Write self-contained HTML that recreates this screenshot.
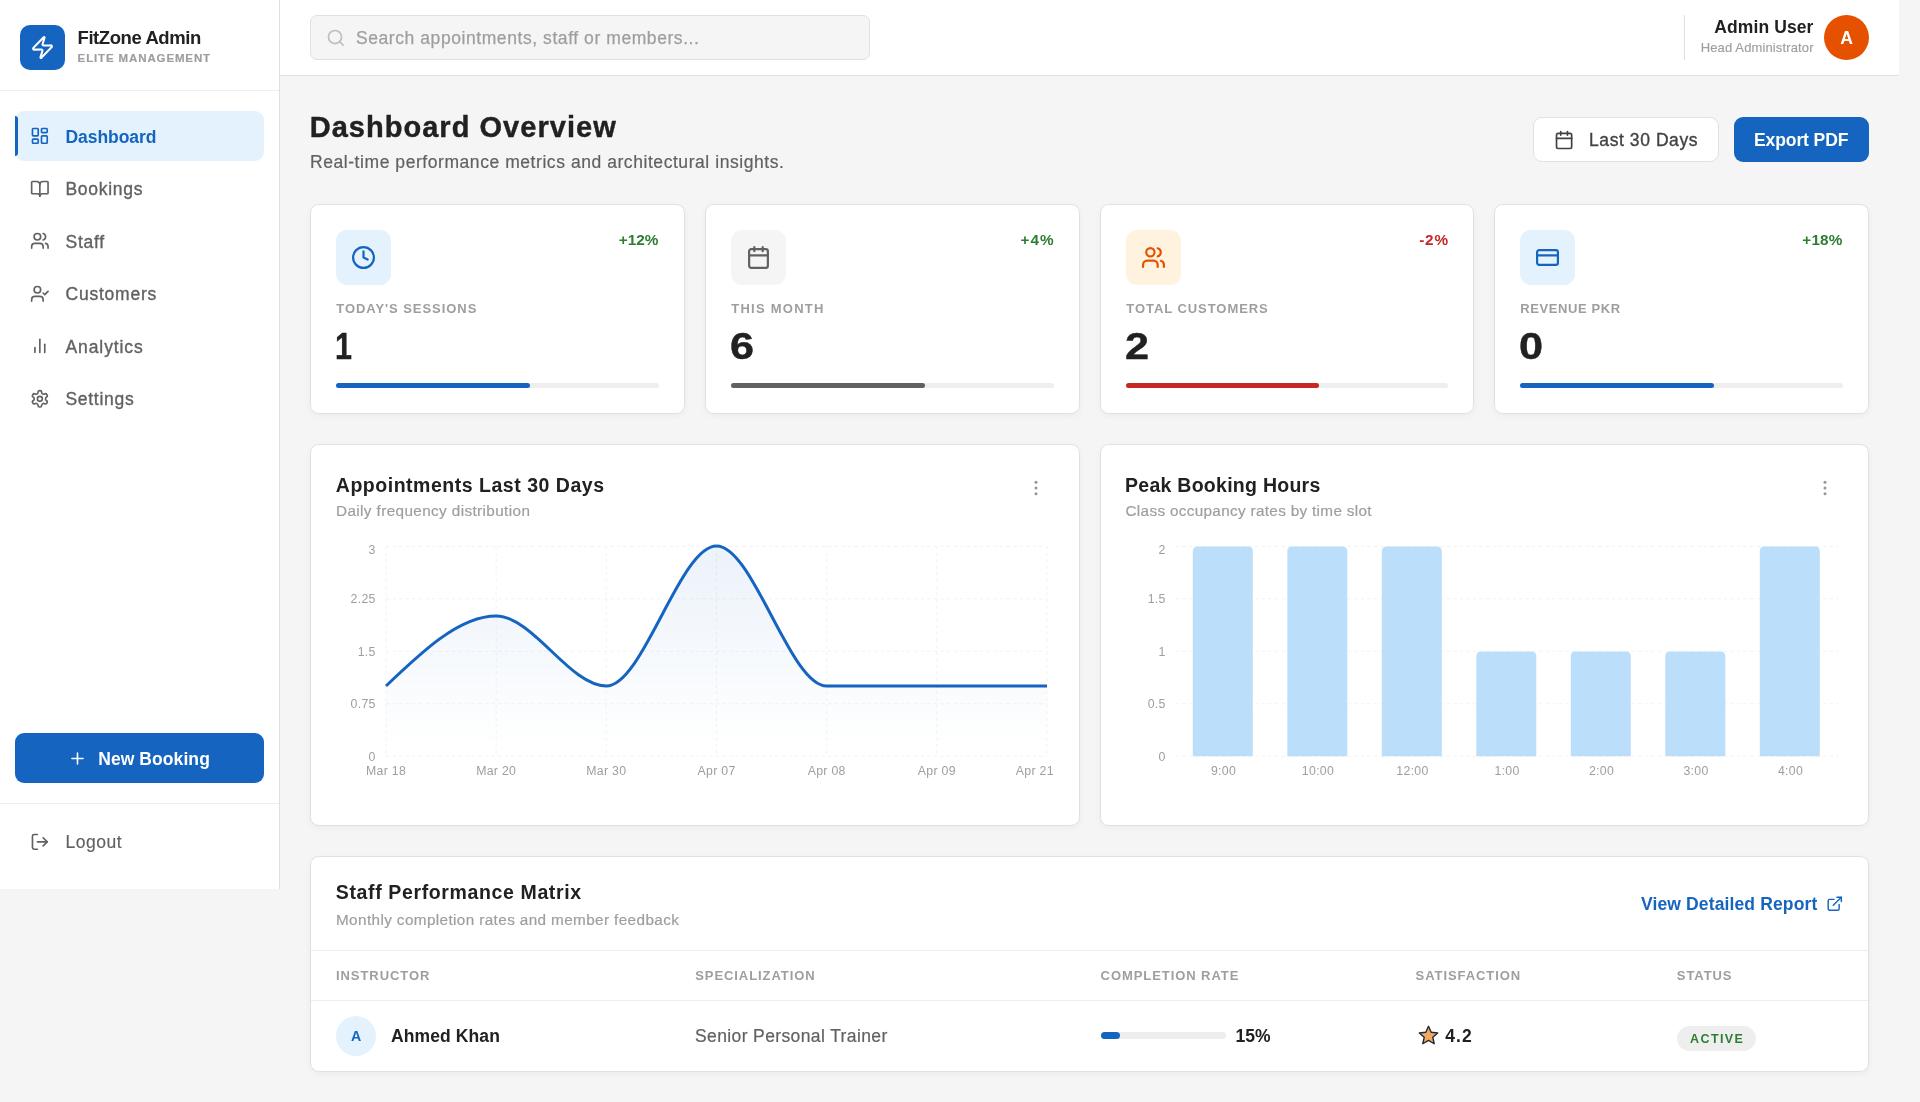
<!DOCTYPE html>
<html lang="en">
<head>
<meta charset="utf-8">
<title>FitZone Admin</title>
<style>
*{box-sizing:border-box;margin:0;padding:0}
html,body{width:1920px;height:1102px;overflow:hidden}
body{background:#f5f5f5;font-family:"Liberation Sans",sans-serif;color:#212121;position:relative;-webkit-font-smoothing:antialiased}
#root{position:absolute;left:0;top:0;width:1920px;height:1102px;will-change:transform}
.abs{position:absolute}
.t{position:absolute;white-space:nowrap;line-height:1}
.b{font-weight:700}
svg.i{position:absolute;fill:none;stroke:currentColor;stroke-width:2;stroke-linecap:round;stroke-linejoin:round}
/* sidebar */
#sb{position:absolute;left:0;top:0;width:280px;height:889px;background:#fff;border-right:1px solid #e0e0e0}
#sbh{position:absolute;left:0;top:0;width:279px;height:91px;border-bottom:1px solid #eeeeee}
#logo{position:absolute;left:20px;top:25px;width:45px;height:45px;border-radius:10px;background:#1565c0;color:#fff}
.nav{position:absolute;left:15px;width:249px;height:50.3px;border-radius:9px;color:#616161}
.nav.on{background:#e3f2fd;color:#1565c0}
.nav.on:before{content:"";position:absolute;left:0;top:5px;bottom:5px;width:3px;background:#1565c0;border-radius:0 3px 3px 0}
.nav .t{left:50.5px;top:17.6px;font-size:17.5px;-webkit-text-stroke:.35px currentColor}
.nav.on .t{font-weight:700;-webkit-text-stroke:0;letter-spacing:-.07px}
.nav svg.i{left:15.15px;top:15.2px;width:19.7px;height:19.7px}
#nb{position:absolute;left:15px;top:733px;width:249px;height:50px;border-radius:9px;background:#1565c0;color:#fff}
#sbf{position:absolute;left:0;top:803px;width:279px;height:1px;background:#eeeeee}
/* header */
#hd{position:absolute;left:280px;top:0;width:1619px;height:76px;background:#fff;border-bottom:1px solid #e0e0e0}
#search{position:absolute;left:30px;top:15px;width:560px;height:45px;border-radius:7px;background:#f5f5f5;border:1px solid #e0e0e0;color:#9e9e9e}
#av{position:absolute;left:1544px;top:15px;width:45px;height:45px;border-radius:50%;background:#e65100;color:#fff}
/* cards */
.card{position:absolute;background:#fff;border:1px solid #e0e0e0;border-radius:8.75px;box-shadow:0 2px 7px rgba(0,0,0,.04)}
.sc{top:204px;width:375px;height:210px}
.ib{position:absolute;left:25.2px;top:25px;width:54.8px;height:54.8px;border-radius:11px}
.ib svg.i{left:15px;top:15px;width:25px;height:25px;stroke-width:2.1}
.pc{right:25.6px;top:27px;font-size:15.3px}
.lb{left:25.3px;top:96.7px;font-size:13px;letter-spacing:.94px;color:#9e9e9e}
.nm{left:24.2px;top:123.6px;font-size:36.3px;color:#212121;-webkit-text-stroke:.4px #212121;transform-origin:0 0;transform:scaleX(1.19)}
.pb{position:absolute;left:25px;right:25.3px;top:177.9px;height:5px;border-radius:3px;background:#eeeeee}
.pb div{width:60%;height:100%;border-radius:3px}
.ct{top:475.9px;font-size:19.5px;color:#212121}
.cs{top:503px;font-size:15.3px;color:#9e9e9e;-webkit-text-stroke:.2px currentColor}
.th{top:968.6px;font-size:13px;letter-spacing:.93px;color:#9e9e9e}
</style>
</head>
<body>
<div id="root">

<!-- SIDEBAR -->
<div id="sb">
  <div id="sbh">
    <div id="logo">
      <svg class="i" style="left:10px;top:9.9px;width:25px;height:25px" viewBox="0 0 24 24"><path d="M4 14a1 1 0 0 1-.78-1.63l9.9-10.2a.5.5 0 0 1 .86.46l-1.92 6.02A1 1 0 0 0 13 10h7a1 1 0 0 1 .78 1.63l-9.9 10.2a.5.5 0 0 1-.86-.46l1.92-6.02A1 1 0 0 0 11 14z"/></svg>
    </div>
    <div class="t b" id="brand" style="left:77.5px;top:28.8px;font-size:18.5px;letter-spacing:-.42px;color:#212121">FitZone Admin</div>
    <div class="t b" id="brand2" style="left:77.6px;top:52.5px;-webkit-text-stroke:.2px currentColor;font-size:11.5px;letter-spacing:.87px;color:#9e9e9e">ELITE MANAGEMENT</div>
  </div>

  <div class="nav on" style="top:111px">
    <svg class="i" viewBox="0 0 24 24"><rect width="7" height="9" x="3" y="3" rx="1"/><rect width="7" height="5" x="14" y="3" rx="1"/><rect width="7" height="9" x="14" y="12" rx="1"/><rect width="7" height="5" x="3" y="16" rx="1"/></svg>
    <div class="t">Dashboard</div>
  </div>
  <div class="nav" style="top:163.5px">
    <svg class="i" viewBox="0 0 24 24"><path d="M12 7v14"/><path d="M3 18a1 1 0 0 1-1-1V4a1 1 0 0 1 1-1h5a4 4 0 0 1 4 4 4 4 0 0 1 4-4h5a1 1 0 0 1 1 1v13a1 1 0 0 1-1 1h-6a3 3 0 0 0-3 3 3 3 0 0 0-3-3z"/></svg>
    <div class="t" style="letter-spacing:0.7px">Bookings</div>
  </div>
  <div class="nav" style="top:216px">
    <svg class="i" viewBox="0 0 24 24"><path d="M16 21v-2a4 4 0 0 0-4-4H6a4 4 0 0 0-4 4v2"/><circle cx="9" cy="7" r="4"/><path d="M22 21v-2a4 4 0 0 0-3-3.87"/><path d="M16 3.13a4 4 0 0 1 0 7.75"/></svg>
    <div class="t" style="letter-spacing:0.72px">Staff</div>
  </div>
  <div class="nav" style="top:268.5px">
    <svg class="i" viewBox="0 0 24 24"><path d="m16 11 2 2 4-4"/><path d="M16 21v-2a4 4 0 0 0-4-4H6a4 4 0 0 0-4 4v2"/><circle cx="9" cy="7" r="4"/></svg>
    <div class="t" style="letter-spacing:0.77px">Customers</div>
  </div>
  <div class="nav" style="top:321px">
    <svg class="i" viewBox="0 0 24 24"><line x1="18" x2="18" y1="20" y2="10"/><line x1="12" x2="12" y1="20" y2="4"/><line x1="6" x2="6" y1="20" y2="14"/></svg>
    <div class="t" style="letter-spacing:0.9px">Analytics</div>
  </div>
  <div class="nav" style="top:373.5px">
    <svg class="i" viewBox="0 0 24 24"><path d="M12.22 2h-.44a2 2 0 0 0-2 2v.18a2 2 0 0 1-1 1.73l-.43.25a2 2 0 0 1-2 0l-.15-.08a2 2 0 0 0-2.73.73l-.22.38a2 2 0 0 0 .73 2.73l.15.1a2 2 0 0 1 1 1.72v.51a2 2 0 0 1-1 1.74l-.15.09a2 2 0 0 0-.73 2.73l.22.38a2 2 0 0 0 2.73.73l.15-.08a2 2 0 0 1 2 0l.43.25a2 2 0 0 1 1 1.73V20a2 2 0 0 0 2 2h.44a2 2 0 0 0 2-2v-.18a2 2 0 0 1 1-1.73l.43-.25a2 2 0 0 1 2 0l.15.08a2 2 0 0 0 2.73-.73l.22-.39a2 2 0 0 0-.73-2.73l-.15-.08a2 2 0 0 1-1-1.74v-.5a2 2 0 0 1 1-1.74l.15-.09a2 2 0 0 0 .73-2.73l-.22-.38a2 2 0 0 0-2.73-.73l-.15.08a2 2 0 0 1-2 0l-.43-.25a2 2 0 0 1-1-1.73V4a2 2 0 0 0-2-2z"/><circle cx="12" cy="12" r="3"/></svg>
    <div class="t" style="letter-spacing:0.7px">Settings</div>
  </div>

  <div id="nb">
    <svg class="i" style="left:53px;top:15.5px;width:19px;height:19px" viewBox="0 0 24 24"><path d="M5 12h14"/><path d="M12 5v14"/></svg>
    <div class="t b" id="nbt" style="left:83.2px;top:18px;letter-spacing:.08px;font-size:17.5px">New Booking</div>
  </div>
  <div id="sbf"></div>
  <div class="nav" style="top:816.6px">
    <svg class="i" viewBox="0 0 24 24"><path d="M9 21H5a2 2 0 0 1-2-2V5a2 2 0 0 1 2-2h4"/><polyline points="16 17 21 12 16 7"/><line x1="21" x2="9" y1="12" y2="12"/></svg>
    <div class="t" style="-webkit-text-stroke:.15px currentColor;letter-spacing:.5px">Logout</div>
  </div>
</div>

<!-- HEADER -->
<div id="hd">
  <div id="search">
    <svg class="i" style="left:14.6px;top:11.8px;width:19.7px;height:19.7px;color:#bdbdbd" viewBox="0 0 24 24"><circle cx="11" cy="11" r="8"/><path d="m21 21-4.3-4.3"/></svg>
    <div class="t" id="ph" style="left:45px;top:13.5px;font-size:17.5px;letter-spacing:.57px;-webkit-text-stroke:.25px currentColor">Search appointments, staff or members...</div>
  </div>
  <div class="abs" style="left:1404px;top:15px;width:1px;height:45px;background:#e0e0e0"></div>
  <div class="t b" id="au" style="right:85.5px;top:18.9px;font-size:17.5px;letter-spacing:.1px;color:#212121">Admin User</div>
  <div class="t" id="ha" style="-webkit-text-stroke:.15px currentColor;right:85.4px;top:41.2px;font-size:13px;letter-spacing:.13px;color:#9e9e9e">Head Administrator</div>
  <div id="av"><div class="t b" style="left:0;width:45px;text-align:center;top:15.1px;font-size:17.6px">A</div></div>
</div>

<!-- TITLE -->
<div class="t b" id="h1" style="left:309.7px;top:112.8px;font-size:29px;letter-spacing:1.03px;color:#212121;-webkit-text-stroke:.4px #212121">Dashboard Overview</div>
<div class="t" id="h2" style="-webkit-text-stroke:.2px currentColor;left:310px;top:154.2px;font-size:17.5px;letter-spacing:.56px;color:#616161">Real-time performance metrics and architectural insights.</div>

<div class="abs" id="b30" style="left:1533px;top:117px;width:186px;height:45px;border-radius:9px;background:#fff;border:1px solid #e0e0e0;color:#424242">
  <svg class="i" style="left:19.9px;top:11.6px;width:20.2px;height:20.2px" viewBox="0 0 24 24"><path d="M8 2v4"/><path d="M16 2v4"/><rect width="18" height="18" x="3" y="4" rx="2"/><path d="M3 10h18"/></svg>
  <div class="t" id="b30t" style="left:55px;top:13.8px;font-size:17.5px;letter-spacing:.58px;-webkit-text-stroke:.35px currentColor">Last 30 Days</div>
</div>
<div class="abs" id="bex" style="left:1734px;top:117px;width:135px;height:45px;border-radius:9px;background:#1565c0;color:#fff">
  <div class="t b" id="bext" style="left:20px;top:15px;letter-spacing:-.1px;font-size:17.5px">Export PDF</div>
</div>

<!-- STAT CARDS -->
<div class="card sc" style="left:310px">
  <div class="ib" style="background:#e3f2fd;color:#1565c0"><svg class="i" viewBox="0 0 24 24"><circle cx="12" cy="12" r="10"/><polyline points="12 6 12 12 16 14"/></svg></div>
  <div class="t b pc" style="color:#2e7d32">+12%</div>
  <div class="t b lb">TODAY'S SESSIONS</div>
  <div class="t b nm" style="transform:scaleX(.84);left:23.8px">1</div>
  <div class="pb"><div style="background:#1565c0"></div></div>
</div>
<div class="card sc" style="left:705px">
  <div class="ib" style="background:#f5f5f5;color:#616161"><svg class="i" viewBox="0 0 24 24"><path d="M8 2v4"/><path d="M16 2v4"/><rect width="18" height="18" x="3" y="4" rx="2"/><path d="M3 10h18"/></svg></div>
  <div class="t b pc" style="color:#2e7d32;letter-spacing:1.05px;right:24.4px">+4%</div>
  <div class="t b lb" style="letter-spacing:1.24px">THIS MONTH</div>
  <div class="t b nm">6</div>
  <div class="pb"><div style="background:#616161"></div></div>
</div>
<div class="card sc" style="left:1100px;width:374px">
  <div class="ib" style="background:#fff3e0;color:#e65100"><svg class="i" viewBox="0 0 24 24"><path d="M16 21v-2a4 4 0 0 0-4-4H6a4 4 0 0 0-4 4v2"/><circle cx="9" cy="7" r="4"/><path d="M22 21v-2a4 4 0 0 0-3-3.87"/><path d="M16 3.13a4 4 0 0 1 0 7.75"/></svg></div>
  <div class="t b pc" style="color:#c62828;letter-spacing:.8px;right:24.2px">-2%</div>
  <div class="t b lb">TOTAL CUSTOMERS</div>
  <div class="t b nm">2</div>
  <div class="pb"><div style="background:#c62828"></div></div>
</div>
<div class="card sc" style="left:1494px">
  <div class="ib" style="background:#e3f2fd;color:#1565c0"><svg class="i" viewBox="0 0 24 24"><rect width="20" height="14" x="2" y="5" rx="2"/><line x1="2" x2="22" y1="10" y2="10"/></svg></div>
  <div class="t b pc" style="color:#2e7d32;letter-spacing:.2px;right:25.4px">+18%</div>
  <div class="t b lb" style="letter-spacing:.6px">REVENUE PKR</div>
  <div class="t b nm">0</div>
  <div class="pb"><div style="background:#1565c0"></div></div>
</div>

<!-- CHART CARDS -->
<div class="card" style="left:310px;top:444px;width:770px;height:382px"></div>
<div class="card" style="left:1100px;top:444px;width:769px;height:382px"></div>
<div class="t b ct" id="ct1" style="left:335.8px;letter-spacing:.52px">Appointments Last 30 Days</div>
<div class="t cs" id="cs1" style="left:336px;letter-spacing:.38px">Daily frequency distribution</div>
<div class="t b ct" id="ct2" style="left:1125px;letter-spacing:.27px">Peak Booking Hours</div>
<div class="t cs" id="cs2" style="left:1125.5px;letter-spacing:.32px">Class occupancy rates by time slot</div>
<svg class="abs" style="left:0;top:0" width="1920" height="1102" viewBox="0 0 1920 1102" font-family="Liberation Sans, sans-serif" font-size="12.3" fill="#9e9e9e">
<defs><linearGradient id="ag" x1="0" y1="0" x2="0" y2="1"><stop offset="5%" stop-color="#1565c0" stop-opacity="0.08"/><stop offset="95%" stop-color="#1565c0" stop-opacity="0"/></linearGradient></defs>
<circle cx="1036" cy="482.15" r="1.5" fill="#969696"/>
<circle cx="1036" cy="487.95" r="1.5" fill="#969696"/>
<circle cx="1036" cy="493.75" r="1.5" fill="#969696"/>
<circle cx="1825" cy="482.15" r="1.5" fill="#969696"/>
<circle cx="1825" cy="487.95" r="1.5" fill="#969696"/>
<circle cx="1825" cy="493.75" r="1.5" fill="#969696"/>
<g stroke="#f2f2f2" stroke-width="1" stroke-dasharray="3.3 3.3" fill="none"><path d="M386,546.5H1047"/><path d="M386,598.75H1047"/><path d="M386,651.25H1047"/><path d="M386,703.75H1047"/><path d="M386,756.25H1047"/><path d="M386.0,546V756.5"/><path d="M496.2,546V756.5"/><path d="M606.3,546V756.5"/><path d="M716.5,546V756.5"/><path d="M826.7,546V756.5"/><path d="M936.8,546V756.5"/><path d="M1047.0,546V756.5"/><path d="M1176,546.5H1838"/><path d="M1176,598.75H1838"/><path d="M1176,651.25H1838"/><path d="M1176,703.75H1838"/><path d="M1176,756.25H1838"/></g>
<path d="M386.00,686.00C422.72,651.00,459.44,616.00,496.17,616.00C532.89,616.00,569.61,686.00,606.33,686.00C643.06,686.00,679.78,546.00,716.50,546.00C753.22,546.00,789.94,686.00,826.67,686.00C863.39,686.00,900.11,686.00,936.83,686.00C973.56,686.00,1010.28,686.00,1047.00,686.00L1047,756L386,756Z" fill="url(#ag)"/>
<path d="M386.00,686.00C422.72,651.00,459.44,616.00,496.17,616.00C532.89,616.00,569.61,686.00,606.33,686.00C643.06,686.00,679.78,546.00,716.50,546.00C753.22,546.00,789.94,686.00,826.67,686.00C863.39,686.00,900.11,686.00,936.83,686.00C973.56,686.00,1010.28,686.00,1047.00,686.00" fill="none" stroke="#1565c0" stroke-width="3" stroke-linecap="butt"/>
<text x="375.8" y="554" text-anchor="end" letter-spacing=".35">3</text>
<text x="375.8" y="603.1" text-anchor="end" letter-spacing=".35">2.25</text>
<text x="375.8" y="655.8" text-anchor="end" letter-spacing=".35">1.5</text>
<text x="375.8" y="708.2" text-anchor="end" letter-spacing=".35">0.75</text>
<text x="375.8" y="760.7" text-anchor="end" letter-spacing=".35">0</text>
<text x="386.0" y="775" text-anchor="middle" letter-spacing=".3">Mar 18</text>
<text x="496.2" y="775" text-anchor="middle" letter-spacing=".3">Mar 20</text>
<text x="606.3" y="775" text-anchor="middle" letter-spacing=".3">Mar 30</text>
<text x="716.5" y="775" text-anchor="middle" letter-spacing=".3">Apr 07</text>
<text x="826.7" y="775" text-anchor="middle" letter-spacing=".3">Apr 08</text>
<text x="936.8" y="775" text-anchor="middle" letter-spacing=".3">Apr 09</text>
<text x="1034.8" y="775" text-anchor="middle" letter-spacing=".3">Apr 21</text>
<path d="M1192.80,756.3V550.90a4.4,4.4 0 0 1 4.4,-4.4h51.2a4.4,4.4 0 0 1 4.4,4.4V756.3Z" fill="#bbdefb"/>
<path d="M1287.30,756.3V550.90a4.4,4.4 0 0 1 4.4,-4.4h51.2a4.4,4.4 0 0 1 4.4,4.4V756.3Z" fill="#bbdefb"/>
<path d="M1381.80,756.3V550.90a4.4,4.4 0 0 1 4.4,-4.4h51.2a4.4,4.4 0 0 1 4.4,4.4V756.3Z" fill="#bbdefb"/>
<path d="M1476.30,756.3V655.90a4.4,4.4 0 0 1 4.4,-4.4h51.2a4.4,4.4 0 0 1 4.4,4.4V756.3Z" fill="#bbdefb"/>
<path d="M1570.80,756.3V655.90a4.4,4.4 0 0 1 4.4,-4.4h51.2a4.4,4.4 0 0 1 4.4,4.4V756.3Z" fill="#bbdefb"/>
<path d="M1665.30,756.3V655.90a4.4,4.4 0 0 1 4.4,-4.4h51.2a4.4,4.4 0 0 1 4.4,4.4V756.3Z" fill="#bbdefb"/>
<path d="M1759.80,756.3V550.90a4.4,4.4 0 0 1 4.4,-4.4h51.2a4.4,4.4 0 0 1 4.4,4.4V756.3Z" fill="#bbdefb"/>
<text x="1165.8" y="554" text-anchor="end" letter-spacing=".35">2</text>
<text x="1165.8" y="603.1" text-anchor="end" letter-spacing=".35">1.5</text>
<text x="1165.8" y="655.8" text-anchor="end" letter-spacing=".35">1</text>
<text x="1165.8" y="708.2" text-anchor="end" letter-spacing=".35">0.5</text>
<text x="1165.8" y="760.7" text-anchor="end" letter-spacing=".35">0</text>
<text x="1223.5" y="775" text-anchor="middle" letter-spacing=".3">9:00</text>
<text x="1318.0" y="775" text-anchor="middle" letter-spacing=".3">10:00</text>
<text x="1412.5" y="775" text-anchor="middle" letter-spacing=".3">12:00</text>
<text x="1507.0" y="775" text-anchor="middle" letter-spacing=".3">1:00</text>
<text x="1601.5" y="775" text-anchor="middle" letter-spacing=".3">2:00</text>
<text x="1696.0" y="775" text-anchor="middle" letter-spacing=".3">3:00</text>
<text x="1790.5" y="775" text-anchor="middle" letter-spacing=".3">4:00</text>
</svg>

<!-- STAFF TABLE -->
<div class="card" style="left:310px;top:856px;width:1559px;height:216px"></div>
<div class="t b" id="st" style="left:335.8px;top:882.6px;font-size:19.5px;letter-spacing:.63px;color:#212121">Staff Performance Matrix</div>
<div class="t" id="ss" style="-webkit-text-stroke:.2px currentColor;left:336px;top:912.2px;font-size:15.3px;letter-spacing:.38px;color:#9e9e9e">Monthly completion rates and member feedback</div>
<div class="t b" id="vd" style="left:1641px;top:896.2px;font-size:17.5px;letter-spacing:.13px;color:#1565c0">View Detailed Report</div>
<svg class="i" style="left:1826.2px;top:894.8px;width:17.5px;height:17.5px;color:#1565c0" viewBox="0 0 24 24"><path d="M15 3h6v6"/><path d="M10 14 21 3"/><path d="M18 13v6a2 2 0 0 1-2 2H5a2 2 0 0 1-2-2V8a2 2 0 0 1 2-2h6"/></svg>
<div class="abs" style="left:311px;top:950px;width:1557px;height:1px;background:#eeeeee"></div>
<div class="abs" style="left:311px;top:1000px;width:1557px;height:1px;background:#eeeeee"></div>
<div class="t b th" id="th1" style="left:336px">INSTRUCTOR</div>
<div class="t b th" id="th2" style="left:695.2px">SPECIALIZATION</div>
<div class="t b th" id="th3" style="left:1100.6px">COMPLETION RATE</div>
<div class="t b th" id="th4" style="left:1415.6px">SATISFACTION</div>
<div class="t b th" id="th5" style="left:1676.8px">STATUS</div>
<div class="abs" style="left:336px;top:1016px;width:40px;height:40px;border-radius:50%;background:#e3f2fd"></div>
<div class="t b" style="left:336px;width:40px;text-align:center;top:1028.7px;font-size:14.2px;color:#1565c0">A</div>
<div class="t b" id="ak" style="letter-spacing:.1px;left:391px;top:1027.9px;font-size:17.5px;color:#212121">Ahmed Khan</div>
<div class="t" id="sp" style="-webkit-text-stroke:.2px currentColor;left:695px;top:1027.9px;font-size:17.5px;letter-spacing:.38px;color:#616161">Senior Personal Trainer</div>
<div class="abs" style="left:1100.8px;top:1032.3px;width:125px;height:6.6px;border-radius:4px;background:#eeeeee"><div style="width:15.3%;height:100%;border-radius:4px;background:#1565c0"></div></div>
<div class="t b" id="p15" style="left:1235.5px;top:1027.9px;font-size:17.5px;color:#212121">15%</div>
<svg class="abs" style="left:1416.5px;top:1024.4px" width="23" height="23" viewBox="0 0 22 22"><path d="M11 2.2l2.55 5.75 6.25.62-4.68 4.18 1.34 6.15L11 15.75 5.54 18.9l1.34-6.15L2.2 8.57l6.25-.62z" fill="#f4a962" stroke="#1f2a33" stroke-width="1.35" stroke-linejoin="round"/></svg>
<div class="t b" id="r42" style="left:1445.3px;top:1027.9px;font-size:17.5px;letter-spacing:1px;color:#212121">4.2</div>
<div class="abs" style="left:1676.8px;top:1025.8px;width:79.2px;height:25.2px;border-radius:13px;background:#eeeeee"></div>
<div class="t b" id="act" style="left:1690px;top:1033.2px;font-size:12.5px;letter-spacing:1.42px;color:#2e7d32">ACTIVE</div>

</div>
</body>
</html>
